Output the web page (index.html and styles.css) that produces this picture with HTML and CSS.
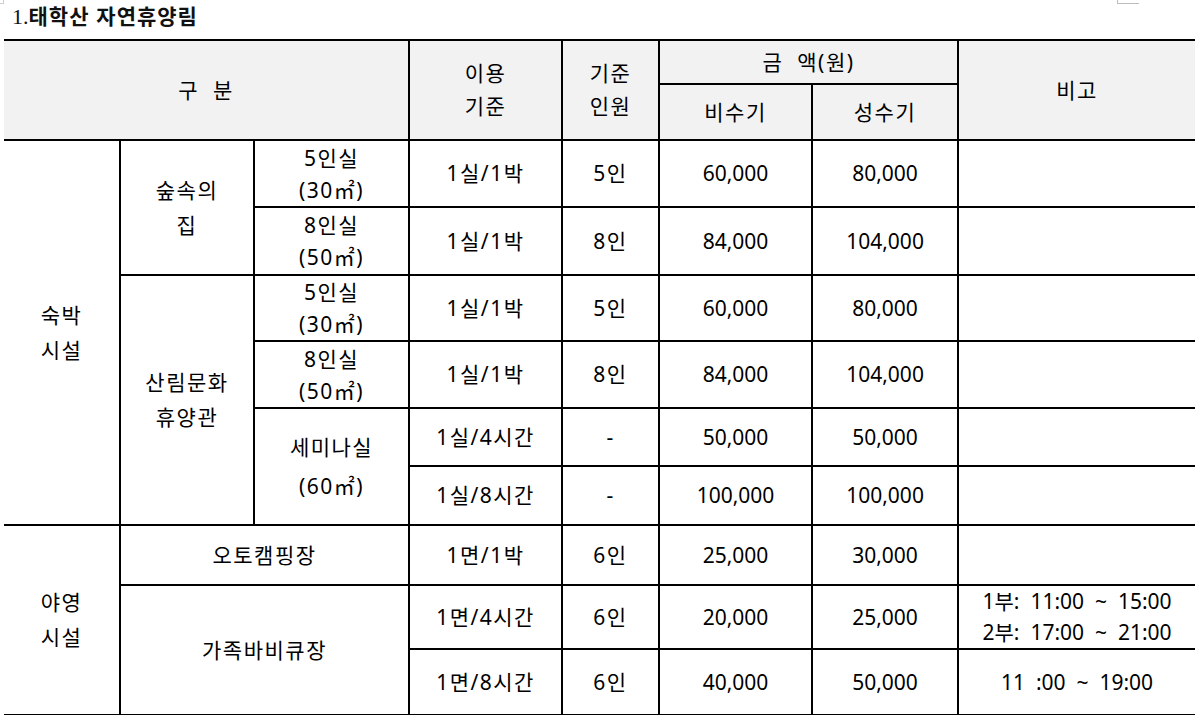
FILE: index.html
```html
<!DOCTYPE html>
<html lang="ko">
<head>
<meta charset="utf-8">
<title>태학산 자연휴양림</title>
<link rel="stylesheet" href="styles.css">
</head>
<body>
<div class="corner-mark"></div>
<div class="corner-mark-left"></div>
<h1 class="title"><span class="num">1.</span>태학산 자연휴양림</h1>
<table class="fee">
  <colgroup>
    <col class="c1"><col class="c2"><col class="c3"><col class="c4">
    <col class="c5"><col class="c6"><col class="c7"><col class="c8">
  </colgroup>
  <thead>
    <tr class="h1">
      <th colspan="3" rowspan="2" class="first">구 &nbsp;분</th>
      <th rowspan="2">이용<br>기준</th>
      <th rowspan="2">기준<br>인원</th>
      <th colspan="2">금 &nbsp;액(원)</th>
      <th rowspan="2" class="last">비고</th>
    </tr>
    <tr class="h2">
      <th>비수기</th>
      <th>성수기</th>
    </tr>
  </thead>
  <tbody>
    <tr class="r67">
      <td rowspan="6" class="first group">숙박<br>시설</td>
      <td rowspan="2" class="name">숲속의<br>집</td>
      <td class="room">5인실<br>(30㎡)</td>
      <td>1실/1박</td><td>5인</td><td class="n">60,000</td><td class="n">80,000</td><td class="last"></td>
    </tr>
    <tr class="r68">
      <td class="room">8인실<br>(50㎡)</td>
      <td>1실/1박</td><td>8인</td><td class="n">84,000</td><td class="n">104,000</td><td class="last"></td>
    </tr>
    <tr class="r65">
      <td rowspan="4" class="name">산림문화<br>휴양관</td>
      <td class="room">5인실<br>(30㎡)</td>
      <td>1실/1박</td><td>5인</td><td class="n">60,000</td><td class="n">80,000</td><td class="last"></td>
    </tr>
    <tr class="r67">
      <td class="room">8인실<br>(50㎡)</td>
      <td>1실/1박</td><td>8인</td><td class="n">84,000</td><td class="n">104,000</td><td class="last"></td>
    </tr>
    <tr class="r58">
      <td rowspan="2" class="seminar">세미나실<br>(60㎡)</td>
      <td>1실/4시간</td><td>-</td><td class="n">50,000</td><td class="n">50,000</td><td class="last"></td>
    </tr>
    <tr class="r59">
      <td>1실/8시간</td><td>-</td><td class="n">100,000</td><td class="n">100,000</td><td class="last"></td>
    </tr>
    <tr class="r60">
      <td rowspan="3" class="first group">야영<br>시설</td>
      <td colspan="2">오토캠핑장</td>
      <td>1면/1박</td><td>6인</td><td class="n">25,000</td><td class="n">30,000</td><td class="last"></td>
    </tr>
    <tr class="r64">
      <td colspan="2" rowspan="2">가족바비큐장</td>
      <td>1면/4시간</td><td>6인</td><td class="n">20,000</td><td class="n">25,000</td>
      <td class="last note">1부: &nbsp;11:00 &nbsp;~ &nbsp;15:00<br>2부: &nbsp;17:00 &nbsp;~ &nbsp;21:00</td>
    </tr>
    <tr class="r66">
      <td>1면/8시간</td><td>6인</td><td class="n">40,000</td><td class="n">50,000</td>
      <td class="last n">11 &nbsp;:00 &nbsp;~ &nbsp;19:00</td>
    </tr>
  </tbody>
</table>
</body>
</html>
```
FILE: styles.css
```css
html, body {
  margin: 0;
  padding: 0;
  background: #ffffff;
}
body {
  position: relative;
  width: 1200px;
  height: 715px;
  overflow: hidden;
  font-family: "Noto Sans", "Noto Sans CJK KR", sans-serif;
  color: #000;
}
.corner-mark {
  position: absolute;
  left: 1117px;
  top: 0;
  width: 21px;
  height: 3px;
  border-left: 1px solid #bdbdbd;
  border-bottom: 1px solid #bdbdbd;
}
.corner-mark-left {
  position: absolute;
  left: 0;
  top: 0;
  width: 3px;
  height: 3px;
  border-right: 1px solid #cfcfcf;
  border-bottom: 1px solid #cfcfcf;
}
.title {
  margin: 0;
  padding: 0 0 0 12px;
  height: 39px;
  line-height: 31px;
  font-family: "Noto Sans CJK KR", sans-serif;
  font-size: 21px;
  font-weight: 700;
  color: #111;
  letter-spacing: 1px;
}
.title .num {
  font-family: "Liberation Serif", serif;
  font-weight: 400;
  font-size: 22px;
  letter-spacing: 0;
}
.fee {
  margin-left: 4px;
  width: 1191px;
  table-layout: fixed;
  border-collapse: collapse;
  font-size: 21px;
  line-height: 33px;
  letter-spacing: 1.5px;
}
.c1 { width: 116px; }
.c2 { width: 134px; }
.c3 { width: 155px; }
.c4 { width: 153px; }
.c5 { width: 97px; }
.c6 { width: 153px; }
.c7 { width: 146px; }
.c8 { width: 237px; }
.fee th, .fee td {
  border: 2px solid #000;
  padding: 0;
  text-align: center;
  vertical-align: middle;
  font-weight: 400;
}
.fee th {
  background: #f2f2f2;
}
.fee .n { letter-spacing: 0; }
.fee .first { border-left: none; }
.fee .last { border-right: none; }
.h1 th { height: 42px; }
.h2 th { height: 54px; }
.r58 td { height: 56px; }
.r59 td { height: 57px; }
.r60 td { height: 58px; }
.r64 td { height: 62px; }
.r65 td { height: 63px; }
.r66 td { height: 64px; }
.r67 td { height: 65px; }
.r68 td { height: 66px; }
.fee .room { line-height: 32px; }
.fee .name, .fee .group { line-height: 35px; }
.fee .seminar { line-height: 39px; }
.fee .note { line-height: 31px; letter-spacing: 0; }
```
